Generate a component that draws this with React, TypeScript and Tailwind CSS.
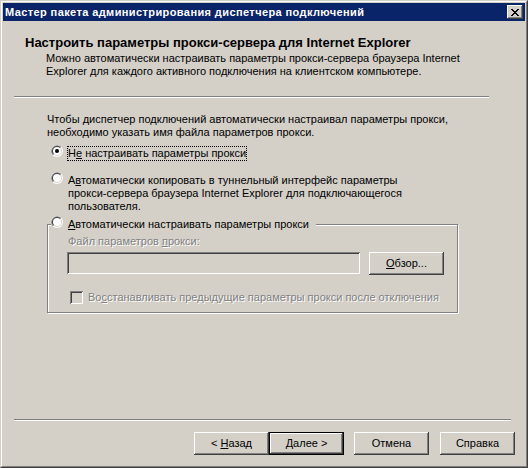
import type { ReactNode } from 'react';

const raised =
  'bg-[#d4d0c8] shadow-[inset_-1px_-1px_0_#404040,inset_1px_1px_0_#fff,inset_-2px_-2px_0_#808080,inset_2px_2px_0_#d4d0c8]';
const sunken =
  'bg-[#d4d0c8] shadow-[inset_1px_1px_0_#808080,inset_-1px_-1px_0_#fff,inset_2px_2px_0_#404040,inset_-2px_-2px_0_#d4d0c8]';
const disabledText = 'text-[#808080] [text-shadow:1px_1px_0_#fff]';

const Radio = ({ checked }: { checked?: boolean }) => (
  <svg width="12" height="12" viewBox="0 0 12 12" className="shrink-0 mt-[-1px]">
    <circle cx="6" cy="6" r="6" fill="#fff" />
    <path d="M1.76 10.24 A6 6 0 0 1 10.24 1.76 Z" fill="#808080" />
    <circle cx="6" cy="6" r="5" fill="#d4d0c8" />
    <path d="M2.46 9.54 A5 5 0 0 1 9.54 2.46 Z" fill="#404040" />
    <circle cx="6" cy="6" r="4" fill="#fff" />
    {checked && <circle cx="6" cy="6" r="2" fill="#000" />}
  </svg>
);

const Button = ({
  children,
  isDefault,
  className = '',
}: {
  children: ReactNode;
  isDefault?: boolean;
  className?: string;
}) => (
  <div
    className={`h-[23px] w-[75px] flex items-center justify-center text-[11px] leading-[13px] text-black whitespace-pre ${raised} ${
      isDefault ? 'border border-black' : ''
    } ${className}`}
  >
    {children}
  </div>
);

// pixel X of the classic close box
const CloseGlyph = () => {
  const rows = ['XX....XX', '.XX..XX.', '..XXXX..', '...XX...', '..XXXX..', '.XX..XX.', 'XX....XX'];
  return (
    <svg width="8" height="7" viewBox="0 0 8 7" shapeRendering="crispEdges">
      {rows.flatMap((r, y) =>
        r.split('').map((c, x) => (c === 'X' ? <rect key={`${x}-${y}`} x={x} y={y} width="1" height="1" fill="#000" /> : null))
      )}
    </svg>
  );
};

export default function App() {
  return (
    <div className="w-[528px] h-[468px] font-['Liberation_Sans',Arial,sans-serif] text-black border border-t-[#d4d0c8] border-l-[#d4d0c8] border-r-[#404040] border-b-[#404040]">
      <div className="h-full border border-t-white border-l-white border-r-[#808080] border-b-[#808080] bg-[#d4d0c8] p-px flex flex-col">
        {/* Title bar */}
        <div className="h-[18px] shrink-0 bg-[#0a246a] flex items-center justify-between pl-[2px] pr-[2px]">
          <span className="text-white font-bold text-[11px] leading-[13px] tracking-[0.4px]">
            Мастер пакета администрирования диспетчера подключений
          </span>
          <div className={`w-[16px] h-[14px] flex items-center justify-center ${raised}`}>
            <CloseGlyph />
          </div>
        </div>

        <div className="flex-1 flex flex-col text-[11px] leading-[13px]">
          {/* Header */}
          <div className="pl-[22px] mt-[14px] font-bold text-[13px] leading-[16px]">
            Настроить параметры прокси-сервера для Internet Explorer
          </div>
          <div className="pl-[43px] mt-[1px]">
            Можно автоматически настраивать параметры прокси-сервера браузера Internet
            <br />
            Explorer для каждого активного подключения на клиентском компьютере.
          </div>
          <div className="ml-[11px] mt-[18px] w-[475px] h-[2px] border-t border-t-[#808080] border-b border-b-white" />

          {/* Body */}
          <div className="pl-[44px] mt-[15px]">
            Чтобы диспетчер подключений автоматически настраивал параметры прокси,
            <br />
            необходимо указать имя файла параметров прокси.
          </div>

          <div className="flex items-start pl-[48px] mt-[7px] gap-[4px]">
            <Radio checked />
            <span className="border border-dotted border-black">
              Н<u>е</u> настраивать параметры прокси
            </span>
          </div>

          <div className="flex items-start pl-[48px] mt-[12px] gap-[4px]">
            <Radio />
            <span className="border border-transparent">
              А<u>в</u>томатически копировать в туннельный интерфейс параметры
              <br />
              прокси-сервера браузера Internet Explorer для подключающегося
              <br />
              пользователя.
            </span>
          </div>

          {/* Group box */}
          <div className="relative ml-[44px] mt-[10px] w-[411px] border border-[#808080] shadow-[inset_1px_1px_0_#fff,1px_1px_0_#fff] pb-[8px]">
            <div className="absolute top-[-9px] left-[3px] flex items-start gap-[4px] bg-[#d4d0c8] pr-[6px] pt-px">
              <Radio />
              <span className="border border-transparent">
                <u>А</u>втоматически настраивать параметры прокси
              </span>
            </div>

            <div className={`ml-[20px] mt-[10px] ${disabledText}`}>
              Файл параметров <u>п</u>рокси:
            </div>
            <div className="flex items-start ml-[19px] mt-[4px] gap-[9px]">
              <div className={`w-[293px] h-[22px] ${sunken}`} />
              <Button>
                <u>О</u>бзор...
              </Button>
            </div>
            <div className="flex items-center ml-[22px] mt-[16px] gap-[5px]">
              <div className={`w-[13px] h-[13px] shrink-0 ${sunken}`} />
              <span className={disabledText}>
                Во<u>с</u>станавливать предыдущие параметры прокси после отключения
              </span>
            </div>
          </div>

          {/* Footer */}
          <div className="ml-[11px] mt-auto w-[497px] h-[2px] border-t border-t-[#808080] border-b border-b-white" />
          <div className="flex justify-end mt-[11px] mb-[10px] mr-[10px]">
            <Button>
              {'< '}
              <u>Н</u>азад
            </Button>
            <Button isDefault>
              <u>Д</u>алее{' >'}
            </Button>
            <Button className="ml-[10px]">Отмена</Button>
            <Button className="ml-[11px]">Справка</Button>
          </div>
        </div>
      </div>
    </div>
  );
}
